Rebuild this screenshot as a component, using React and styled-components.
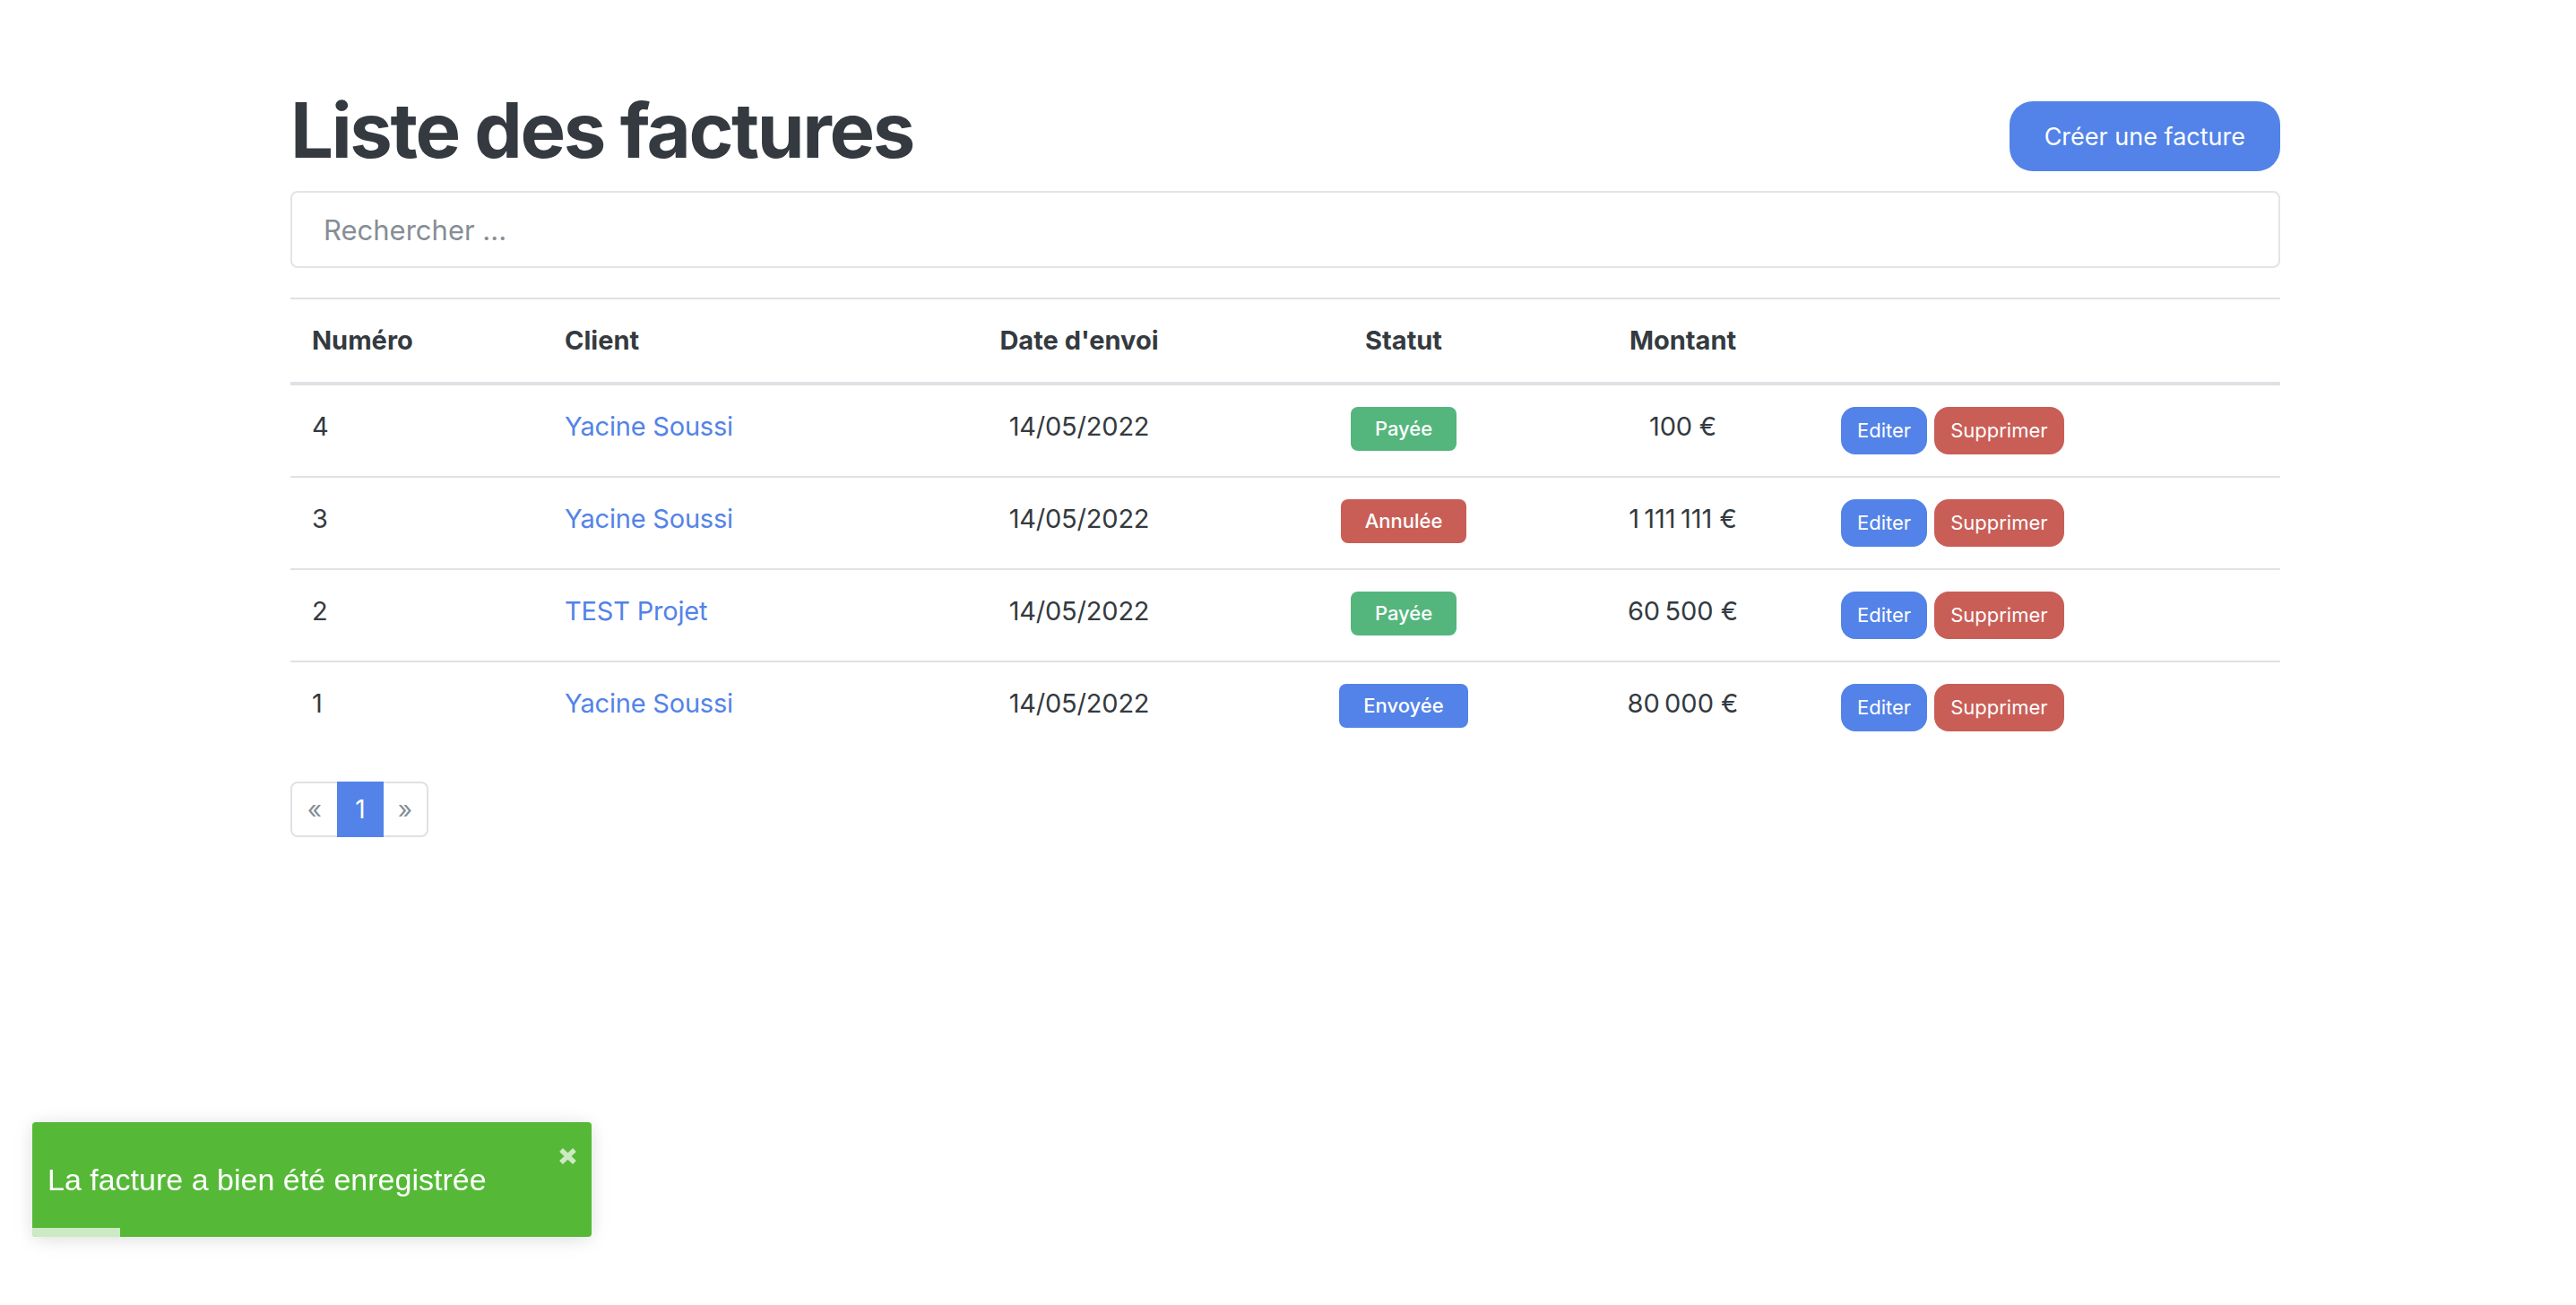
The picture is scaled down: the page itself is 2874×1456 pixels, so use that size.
import React from "react";
import styled, { createGlobalStyle } from "styled-components";

const Global = createGlobalStyle`
  html, body { margin: 0; padding: 0; background: #fff; }
  body { font-family: Inter, "Noto Sans", sans-serif; color: #343a40; }
  * { box-sizing: border-box; }
`;

const Page = styled.div`
  padding-top: 95px;
  width: 2220px;
  margin-left: 324px;
`;

const HeaderRow = styled.div`
  display: flex;
  justify-content: space-between;
  align-items: flex-start;
`;

const Title = styled.h1`
  margin: 0;
  font-family: Inter, sans-serif;
  font-size: 85px;
  font-weight: 700;
  letter-spacing: -2.4px;
  line-height: 1.2;
  color: #343a40;
`;

const PrimaryButton = styled.button`
  margin-top: 18px;
  height: 78px;
  padding: 0 39px;
  border: none;
  border-radius: 26px;
  background: #5383e8;
  color: #fff;
  font-family: Inter, sans-serif;
  font-size: 27px;
  font-weight: 400;
  cursor: pointer;
`;

const Search = styled.input`
  display: block;
  width: 100%;
  margin-top: 16px;
  height: 86px;
  padding: 0 35px;
  border: 2px solid #e1e4e8;
  border-radius: 8px;
  font-family: Inter, sans-serif;
  font-size: 31px;
  color: #495057;
  outline: none;
  &::placeholder { color: #868e96; }
`;

const Table = styled.table`
  width: 100%;
  margin-top: 33px;
  border-collapse: collapse;
  table-layout: fixed;
`;

const Th = styled.th`
  padding: 24px;
  font-size: 29px;
  font-weight: 700;
  line-height: 1.5;
  color: #343a40;
  text-align: ${(p) => (p.$center ? "center" : "left")};
  vertical-align: bottom;
  border-top: 2px solid #dee2e6;
  border-bottom: 4px solid #dee2e6;
`;

const Td = styled.td`
  padding: 24px;
  font-size: 29px;
  letter-spacing: -0.2px;
  line-height: 1.5;
  color: #343a40;
  text-align: ${(p) => (p.$center ? "center" : "left")};
  vertical-align: top;
  border-top: 2px solid #dee2e6;
`;

const ClientLink = styled.a`
  color: #5383e8;
  text-decoration: none;
`;

const Badge = styled.span`
  display: inline-block;
  vertical-align: top;
  height: 49px;
  line-height: 49px;
  padding: 0 27px;
  border-radius: 8px;
  font-size: 22px;
  font-weight: 500;
  letter-spacing: 0;
  color: #fff;
  background: ${(p) => p.$color};
`;

const Actions = styled.div`
  display: flex;
  gap: 8px;
`;

const SmallButton = styled.button`
  height: 53px;
  padding: 0 18px;
  border: none;
  border-radius: 16px;
  background: ${(p) => p.$color};
  color: #fff;
  font-family: Inter, sans-serif;
  font-size: 22px;
  font-weight: 400;
  cursor: pointer;
`;

const Pagination = styled.div`
  display: inline-flex;
  margin-top: 32px;
`;

const PageItem = styled.span`
  display: flex;
  align-items: center;
  justify-content: center;
  width: ${(p) => p.$w}px;
  height: 62px;
  margin-left: -2px;
  border: 2px solid ${(p) => (p.$active ? "#5383e8" : "#dee2e6")};
  background: ${(p) => (p.$active ? "#5383e8" : "#fff")};
  color: ${(p) => (p.$active ? "#fff" : "#868e96")};
  font-size: 28px;
  position: relative;
  z-index: ${(p) => (p.$active ? 1 : 0)};
  &:first-child { margin-left: 0; border-radius: 8px 0 0 8px; }
  &:last-child { border-radius: 0 8px 8px 0; }
`;

const Toast = styled.div`
  position: fixed;
  left: 36px;
  bottom: 76px;
  width: 624px;
  height: 128px;
  display: flex;
  align-items: center;
  padding: 0 17px;
  background: #55b937;
  border-radius: 4px;
  box-shadow: 0 2px 20px 0 rgba(0, 0, 0, 0.1), 0 4px 30px 0 rgba(0, 0, 0, 0.05);
  overflow: hidden;
`;

const ToastText = styled.span`
  font-family: "Liberation Sans", Arial, sans-serif;
  font-size: 34px;
  color: #fff;
`;

const CloseIcon = styled.svg`
  position: absolute;
  top: 28px;
  right: 16px;
  width: 21px;
  height: 20px;
  stroke: #fff;
  opacity: 0.7;
`;

const Progress = styled.div`
  position: absolute;
  left: 0;
  bottom: 0;
  width: 98px;
  height: 10px;
  background: rgba(255, 255, 255, 0.7);
`;

const NNBSP = "\u202f";
const fmt = (n) =>
  String(n).replace(/\B(?=(\d{3})+(?!\d))/g, NNBSP) + "\u00a0€";

const STATUS = {
  PAID: { label: "Payée", color: "#54b67c" },
  CANCELLED: { label: "Annulée", color: "#c95e57" },
  SENT: { label: "Envoyée", color: "#5383e8" },
};

const invoices = [
  { id: 4, client: "Yacine Soussi", date: "14/05/2022", status: "PAID", amount: 100 },
  { id: 3, client: "Yacine Soussi", date: "14/05/2022", status: "CANCELLED", amount: 1111111 },
  { id: 2, client: "TEST Projet", date: "14/05/2022", status: "PAID", amount: 60500 },
  { id: 1, client: "Yacine Soussi", date: "14/05/2022", status: "SENT", amount: 80000 },
];

const widths = [282, 395, 406, 318, 305, 514];

export default function App() {
  return (
    <>
      <Global />
      <Page>
        <HeaderRow>
          <Title>Liste des factures</Title>
          <PrimaryButton>Créer une facture</PrimaryButton>
        </HeaderRow>
        <Search placeholder="Rechercher ..." />
        <Table>
          <colgroup>
            {widths.map((w, i) => (
              <col key={i} style={{ width: w }} />
            ))}
          </colgroup>
          <thead>
            <tr>
              <Th>Numéro</Th>
              <Th>Client</Th>
              <Th $center>Date d'envoi</Th>
              <Th $center>Statut</Th>
              <Th $center>Montant</Th>
              <Th />
            </tr>
          </thead>
          <tbody>
            {invoices.map((inv) => (
              <tr key={inv.id}>
                <Td>{inv.id}</Td>
                <Td>
                  <ClientLink href="#">{inv.client}</ClientLink>
                </Td>
                <Td $center>{inv.date}</Td>
                <Td $center>
                  <Badge $color={STATUS[inv.status].color}>{STATUS[inv.status].label}</Badge>
                </Td>
                <Td $center>{fmt(inv.amount)}</Td>
                <Td>
                  <Actions>
                    <SmallButton $color="#5383e8">Editer</SmallButton>
                    <SmallButton $color="#c95e57">Supprimer</SmallButton>
                  </Actions>
                </Td>
              </tr>
            ))}
          </tbody>
        </Table>
        <Pagination>
          <PageItem $w={54}>«</PageItem>
          <PageItem $w={52} $active>1</PageItem>
          <PageItem $w={52}>»</PageItem>
        </Pagination>
      </Page>
      <Toast>
        <ToastText>La facture a bien été enregistrée</ToastText>
        <CloseIcon viewBox="0 0 21 20" aria-hidden="true">
          <path d="M3 3 L18 17 M18 3 L3 17" strokeWidth="5.5" fill="none" />
        </CloseIcon>
        <Progress />
      </Toast>
    </>
  );
}
